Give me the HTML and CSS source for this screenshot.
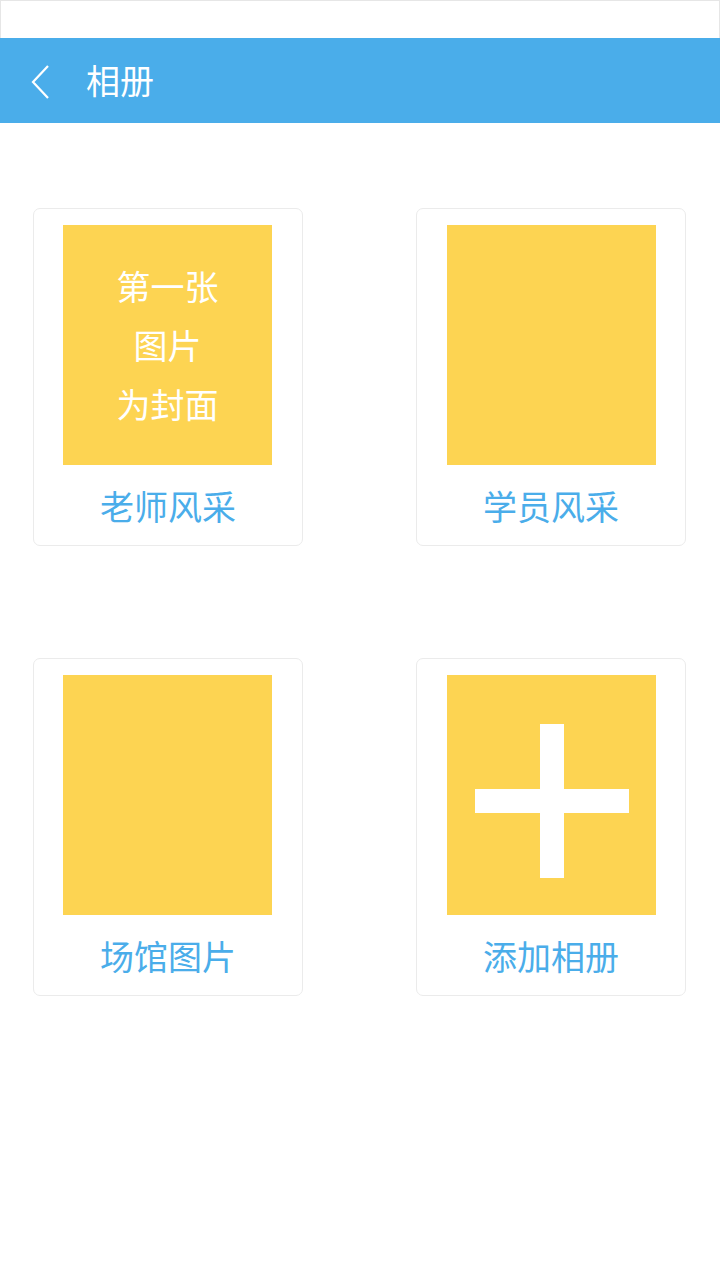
FILE: index.html
```html
<!DOCTYPE html>
<html lang="zh-CN">
<head>
<meta charset="utf-8">
<title>相册</title>
<link rel="stylesheet" href="styles.css">
</head>
<body>
<div class="status-bar"></div>
<header class="header">
  <span class="back" aria-label="返回">
    <svg width="20" height="36" viewBox="0 0 20 36"><path d="M17 2 L2 18 L17 34" fill="none" stroke="#fff" stroke-width="2.2" stroke-linejoin="miter"/></svg>
  </span>
  <h1 class="title">相册</h1>
</header>
<main class="grid">
  <div class="card">
    <div class="cover cover-text">
      <span>第一张</span>
      <span>图片</span>
      <span>为封面</span>
    </div>
    <div class="label">老师风采</div>
  </div>
  <div class="card">
    <div class="cover"></div>
    <div class="label">学员风采</div>
  </div>
  <div class="card">
    <div class="cover"></div>
    <div class="label">场馆图片</div>
  </div>
  <div class="card">
    <div class="cover cover-add">
      <span class="plus"></span>
    </div>
    <div class="label">添加相册</div>
  </div>
</main>
</body>
</html>
```

FILE: styles.css
```css
* { box-sizing: border-box; }
html, body {
  margin: 0;
  padding: 0;
  background: #fff;
  font-family: "Noto Sans CJK SC", "Noto Sans", sans-serif;
}
.status-bar {
  height: 38px;
  border: 1px solid #e6e6e6;
  border-bottom: none;
  background: #fff;
}
.header {
  height: 85px;
  background: #4aadea;
  display: flex;
  align-items: center;
  padding-left: 31px;
}
.back {
  display: flex;
  width: 20px;
  height: 36px;
  margin-top: 2px;
}
.title {
  margin: 0 0 0 35px;
  color: #fff;
  font-size: 34px;
  font-weight: 400;
  line-height: 1;
  margin-top: -2px;
}
.grid {
  display: grid;
  grid-template-columns: 270px 270px;
  column-gap: 113px;
  row-gap: 112px;
  padding: 85px 0 0 33px;
}
.card {
  height: 338px;
  border: 1px solid #ebebeb;
  border-radius: 7px;
  padding: 16px 0 0 29px;
  display: flex;
  flex-direction: column;
}
.card:nth-child(even) { padding-left: 30px; }
.cover {
  width: 209px;
  height: 240px;
  background: #fdd452;
}
.cover-text {
  display: flex;
  flex-direction: column;
  align-items: center;
  justify-content: center;
  color: #fff;
  font-size: 34px;
  line-height: 59px;
  padding-bottom: 2px;
}
.cover-add {
  position: relative;
}
.plus {
  position: absolute;
  left: 28px;
  top: 49px;
  width: 154px;
  height: 154px;
}
.plus::before, .plus::after {
  content: "";
  position: absolute;
  background: #fff;
}
.plus::before {
  left: 65px;
  top: 0;
  width: 24px;
  height: 154px;
}
.plus::after {
  left: 0;
  top: 65px;
  width: 154px;
  height: 24px;
}
.label {
  flex: 1;
  display: flex;
  align-items: center;
  justify-content: center;
  margin-left: -29px;
  width: 268px;
  color: #4aadea;
  font-size: 34px;
  line-height: 1;
  padding-top: 2px;
}
.card:nth-child(even) .label { margin-left: -30px; }
```
